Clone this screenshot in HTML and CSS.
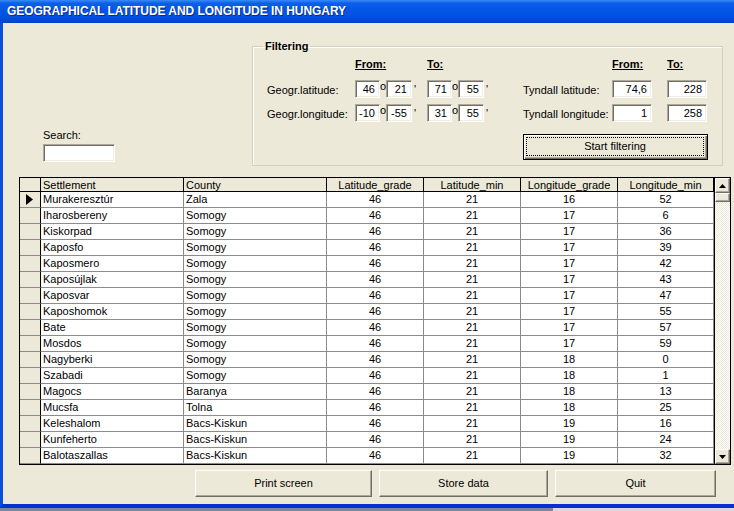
FILE: index.html
```html
<!DOCTYPE html>
<html>
<head>
<meta charset="utf-8">
<title>Geographical latitude and longitude in Hungary</title>
<link rel="stylesheet" href="styles.css">
</head>
<body>
<div class="window">
  <div class="titlebar"><span class="title">GEOGRAPHICAL LATITUDE AND LONGITUDE IN HUNGARY</span></div>
  <div class="client">
    <div class="top">
      <div class="search">
        <div class="slbl">Search:</div>
        <div class="field search-field"></div>
      </div>
      <fieldset class="group">
        <legend>Filtering</legend>
        <div class="filter-grid">
          <div></div>
          <div class="hdr">From:</div>
          <div class="hdr">To:</div>
          <div></div>
          <div class="hdr">From:</div>
          <div class="hdr">To:</div>

          <div class="rlbl">Geogr.latitude:</div>
          <div class="dms"><span class="field w25">46</span><span class="deg">o</span><span class="field w26">21</span><span class="min">'</span></div>
          <div class="dms"><span class="field w25">71</span><span class="deg">o</span><span class="field w26">55</span><span class="min">'</span></div>
          <div class="rlbl">Tyndall latitude:</div>
          <div><span class="field w40">74,6</span></div>
          <div><span class="field w40">228</span></div>

          <div class="rlbl">Geogr.longitude:</div>
          <div class="dms"><span class="field w25">-10</span><span class="deg">o</span><span class="field w26">-55</span><span class="min">'</span></div>
          <div class="dms"><span class="field w25">31</span><span class="deg">o</span><span class="field w26">55</span><span class="min">'</span></div>
          <div class="rlbl">Tyndall longitude:</div>
          <div><span class="field w40">1</span></div>
          <div><span class="field w40">258</span></div>

          <div class="btn-cell">
            <div class="btn default"><span class="focus">Start filtering</span></div>
          </div>
        </div>
      </fieldset>
    </div>

    <div class="grid">
      <div class="rows">
        <div class="row head">
          <div class="c ind"></div>
          <div class="c l">Settlement</div>
          <div class="c l">County</div>
          <div class="c">Latitude_grade</div>
          <div class="c">Latitude_min</div>
          <div class="c">Longitude_grade</div>
          <div class="c">Longitude_min</div>
        </div>
        <div class="row"><div class="c ind"><svg class="arrow" width="7" height="11" viewBox="0 0 7 11"><path d="M0 0 L7 5.5 L0 11 Z" fill="#000"/></svg></div><div class="c l">Murakeresztúr</div><div class="c l">Zala</div><div class="c">46</div><div class="c">21</div><div class="c">16</div><div class="c">52</div></div>
        <div class="row"><div class="c ind"></div><div class="c l">Iharosbereny</div><div class="c l">Somogy</div><div class="c">46</div><div class="c">21</div><div class="c">17</div><div class="c">6</div></div>
        <div class="row"><div class="c ind"></div><div class="c l">Kiskorpad</div><div class="c l">Somogy</div><div class="c">46</div><div class="c">21</div><div class="c">17</div><div class="c">36</div></div>
        <div class="row"><div class="c ind"></div><div class="c l">Kaposfo</div><div class="c l">Somogy</div><div class="c">46</div><div class="c">21</div><div class="c">17</div><div class="c">39</div></div>
        <div class="row"><div class="c ind"></div><div class="c l">Kaposmero</div><div class="c l">Somogy</div><div class="c">46</div><div class="c">21</div><div class="c">17</div><div class="c">42</div></div>
        <div class="row"><div class="c ind"></div><div class="c l">Kaposújlak</div><div class="c l">Somogy</div><div class="c">46</div><div class="c">21</div><div class="c">17</div><div class="c">43</div></div>
        <div class="row"><div class="c ind"></div><div class="c l">Kaposvar</div><div class="c l">Somogy</div><div class="c">46</div><div class="c">21</div><div class="c">17</div><div class="c">47</div></div>
        <div class="row"><div class="c ind"></div><div class="c l">Kaposhomok</div><div class="c l">Somogy</div><div class="c">46</div><div class="c">21</div><div class="c">17</div><div class="c">55</div></div>
        <div class="row"><div class="c ind"></div><div class="c l">Bate</div><div class="c l">Somogy</div><div class="c">46</div><div class="c">21</div><div class="c">17</div><div class="c">57</div></div>
        <div class="row"><div class="c ind"></div><div class="c l">Mosdos</div><div class="c l">Somogy</div><div class="c">46</div><div class="c">21</div><div class="c">17</div><div class="c">59</div></div>
        <div class="row"><div class="c ind"></div><div class="c l">Nagyberki</div><div class="c l">Somogy</div><div class="c">46</div><div class="c">21</div><div class="c">18</div><div class="c">0</div></div>
        <div class="row"><div class="c ind"></div><div class="c l">Szabadi</div><div class="c l">Somogy</div><div class="c">46</div><div class="c">21</div><div class="c">18</div><div class="c">1</div></div>
        <div class="row"><div class="c ind"></div><div class="c l">Magocs</div><div class="c l">Baranya</div><div class="c">46</div><div class="c">21</div><div class="c">18</div><div class="c">13</div></div>
        <div class="row"><div class="c ind"></div><div class="c l">Mucsfa</div><div class="c l">Tolna</div><div class="c">46</div><div class="c">21</div><div class="c">18</div><div class="c">25</div></div>
        <div class="row"><div class="c ind"></div><div class="c l">Keleshalom</div><div class="c l">Bacs-Kiskun</div><div class="c">46</div><div class="c">21</div><div class="c">19</div><div class="c">16</div></div>
        <div class="row"><div class="c ind"></div><div class="c l">Kunfeherto</div><div class="c l">Bacs-Kiskun</div><div class="c">46</div><div class="c">21</div><div class="c">19</div><div class="c">24</div></div>
        <div class="row"><div class="c ind"></div><div class="c l">Balotaszallas</div><div class="c l">Bacs-Kiskun</div><div class="c">46</div><div class="c">21</div><div class="c">19</div><div class="c">32</div></div>
      </div>
      <div class="vscroll">
        <div class="sbtn"><svg width="7" height="4" viewBox="0 0 7 4"><path d="M3.5 0 L7 4 L0 4 Z" fill="#000"/></svg></div>
        <div class="thumb"></div>
        <div class="track"></div>
        <div class="sbtn"><svg width="7" height="4" viewBox="0 0 7 4"><path d="M0 0 L7 0 L3.5 4 Z" fill="#000"/></svg></div>
      </div>
    </div>

    <div class="buttons">
      <div class="btn b1">Print screen</div>
      <div class="btn b2">Store data</div>
      <div class="btn b3">Quit</div>
    </div>
  </div>
  <div class="strip"><div class="strip-left"></div><div class="strip-right"></div></div>
</div>
</body>
</html>
```

FILE: styles.css
```css
* { box-sizing: border-box; }
html, body { margin: 0; padding: 0; }
body {
  width: 734px;
  height: 511px;
  overflow: hidden;
  font-family: "Liberation Sans", Arial, sans-serif;
  font-size: 11px;
  color: #000;
  background: #ECE9D8;
}
.window {
  width: 734px;
  height: 511px;
  display: flex;
  flex-direction: column;
}
.titlebar {
  height: 23px;
  flex: none;
  background: linear-gradient(#3a8cf8 0, #0e60ea 3px, #0356e6 9px, #0052e2 16px, #004bd8 20px, #0041c4 23px);
  padding-left: 7px;
  line-height: 23px;
}
.title {
  color: #fff;
  font-weight: bold;
  font-size: 12px;
  text-shadow: 1px 1px 0 #0a2a8a;
  letter-spacing: -0.05px;
}
.client {
  flex: none;
  height: 485px;
  border-left: 3px solid #0a4edc;
  border-bottom: 4px solid #0731cf;
  background: #ECE9D8;
  display: flex;
  flex-direction: column;
}
.strip {
  flex: none;
  height: 3px;
  display: flex;
}
.strip-left { width: 553px; background: #7d879b; }
.strip-right { flex: 1; background: #d9d9d9; }

/* top area */
.top {
  height: 154px;
  flex: none;
  display: flex;
  align-items: flex-start;
}
.search {
  width: 249px;
  padding: 106px 0 0 40px;
}
.slbl { line-height: 13px; margin-bottom: 2px; }
.field {
  display: block;
  height: 18px;
  background: #fff;
  border-top: 1px solid #aca899;
  border-left: 1px solid #aca899;
  border-right: 1px solid #fff;
  border-bottom: 1px solid #fff;
  box-shadow: inset 1px 1px 0 #716f64, inset -1px -1px 0 #f1efe2;
  text-align: right;
  padding: 1px 4px 0 0;
  line-height: 15px;
}
.search-field { width: 72px; }
.w25 { width: 25px; }
.w26 { width: 26px; }
.w40 { width: 40px; }

.group {
  margin: 17px 0 0 0;
  padding: 0;
  width: 471px;
  height: 126px;
  border: 1px solid #d0d0bf;
  box-shadow: inset 1px 1px 0 #fff;
  min-inline-size: 0;
}
.group legend {
  margin-left: 10px;
  padding: 0 2px;
  font-weight: bold;
  line-height: 13px;
}
.filter-grid {
  display: grid;
  grid-template-columns: 88px 72px 96px 89px 55px 40px;
  grid-template-rows: 16px 18px 18px 26px;
  row-gap: 6px;
  padding: 5px 0 0 14px;
}
.hdr {
  font-weight: bold;
  text-decoration: underline;
  line-height: 13px;
}
.rlbl {
  line-height: 18px;
  padding-top: 1px;
  white-space: nowrap;
}
.dms { display: flex; align-items: flex-start; }
.deg {
  width: 6px;
  font-size: 11px;
  line-height: 13px;
  text-align: center;
}
.min {
  width: 6px;
  line-height: 13px;
  padding-left: 2px;
  padding-top: 3px;
}
.btn-cell {
  grid-column: 4 / span 3;
  margin-top: 6px;
  width: 185px;
}

/* buttons */
.btn {
  height: 27px;
  background: #ECE9D8;
  border-top: 1px solid #fff;
  border-left: 1px solid #fff;
  border-right: 1px solid #716f64;
  border-bottom: 1px solid #716f64;
  box-shadow: inset -1px -1px 0 #aca899;
  text-align: center;
  line-height: 25px;
}
.btn.default {
  height: 26px;
  border: 1px solid #000;
  box-shadow: inset 1px 1px 0 #fff, inset -1px -1px 0 #716f64, inset -2px -2px 0 #aca899;
  padding: 2px 3px 3px 2px;
}
.focus {
  display: block;
  height: 19px;
  border: 1px dotted #000;
  line-height: 17px;
}

/* data grid */
.grid {
  flex: none;
  margin-left: 16px;
  width: 712px;
  height: 288px;
  border: 1px solid #000;
  display: flex;
  background: #fff;
}
.rows { width: 694px; }
.row {
  display: grid;
  grid-template-columns: 21px 143px 143px 97px 97px 97px 96px;
  height: 16px;
}
.c {
  border-right: 1px solid #8c8c8c;
  border-bottom: 1px solid #8c8c8c;
  text-align: center;
  line-height: 15px;
  white-space: nowrap;
  overflow: hidden;
}
.c.l { text-align: left; padding-left: 2px; }
.c.ind {
  background: #ECE9D8;
  border-right-color: #000;
  display: flex;
  align-items: center;
  justify-content: center;
}
.arrow { margin-left: -1px; }
.row.head { height: 14px; background: #ECE9D8; }
.row.head .c {
  border-right-color: #000;
  border-bottom-color: #000;
  line-height: 12px;
  padding-top: 1px;
}
.row.head .c.l { padding-left: 2px; }

.vscroll {
  width: 16px;
  display: flex;
  flex-direction: column;
  border-left: 1px solid #000;
}
.sbtn, .thumb {
  flex: none;
  background: #ECE9D8;
  border-top: 1px solid #fff;
  border-left: 1px solid #fff;
  border-right: 1px solid #716f64;
  border-bottom: 1px solid #716f64;
  box-shadow: inset -1px -1px 0 #aca899;
  display: flex;
  align-items: center;
  justify-content: center;
}
.sbtn { height: 15px; }
.thumb { height: 9px; }
.track {
  flex: 1;
  background: repeating-conic-gradient(#ECE9D8 0 25%, #fff 0 50%) 0 0 / 2px 2px;
}

.buttons {
  flex: none;
  display: flex;
  gap: 7px;
  margin-top: 5px;
  padding-left: 192px;
}
.b1 { width: 177px; }
.b2 { width: 169px; }
.b3 { width: 161px; }
```
